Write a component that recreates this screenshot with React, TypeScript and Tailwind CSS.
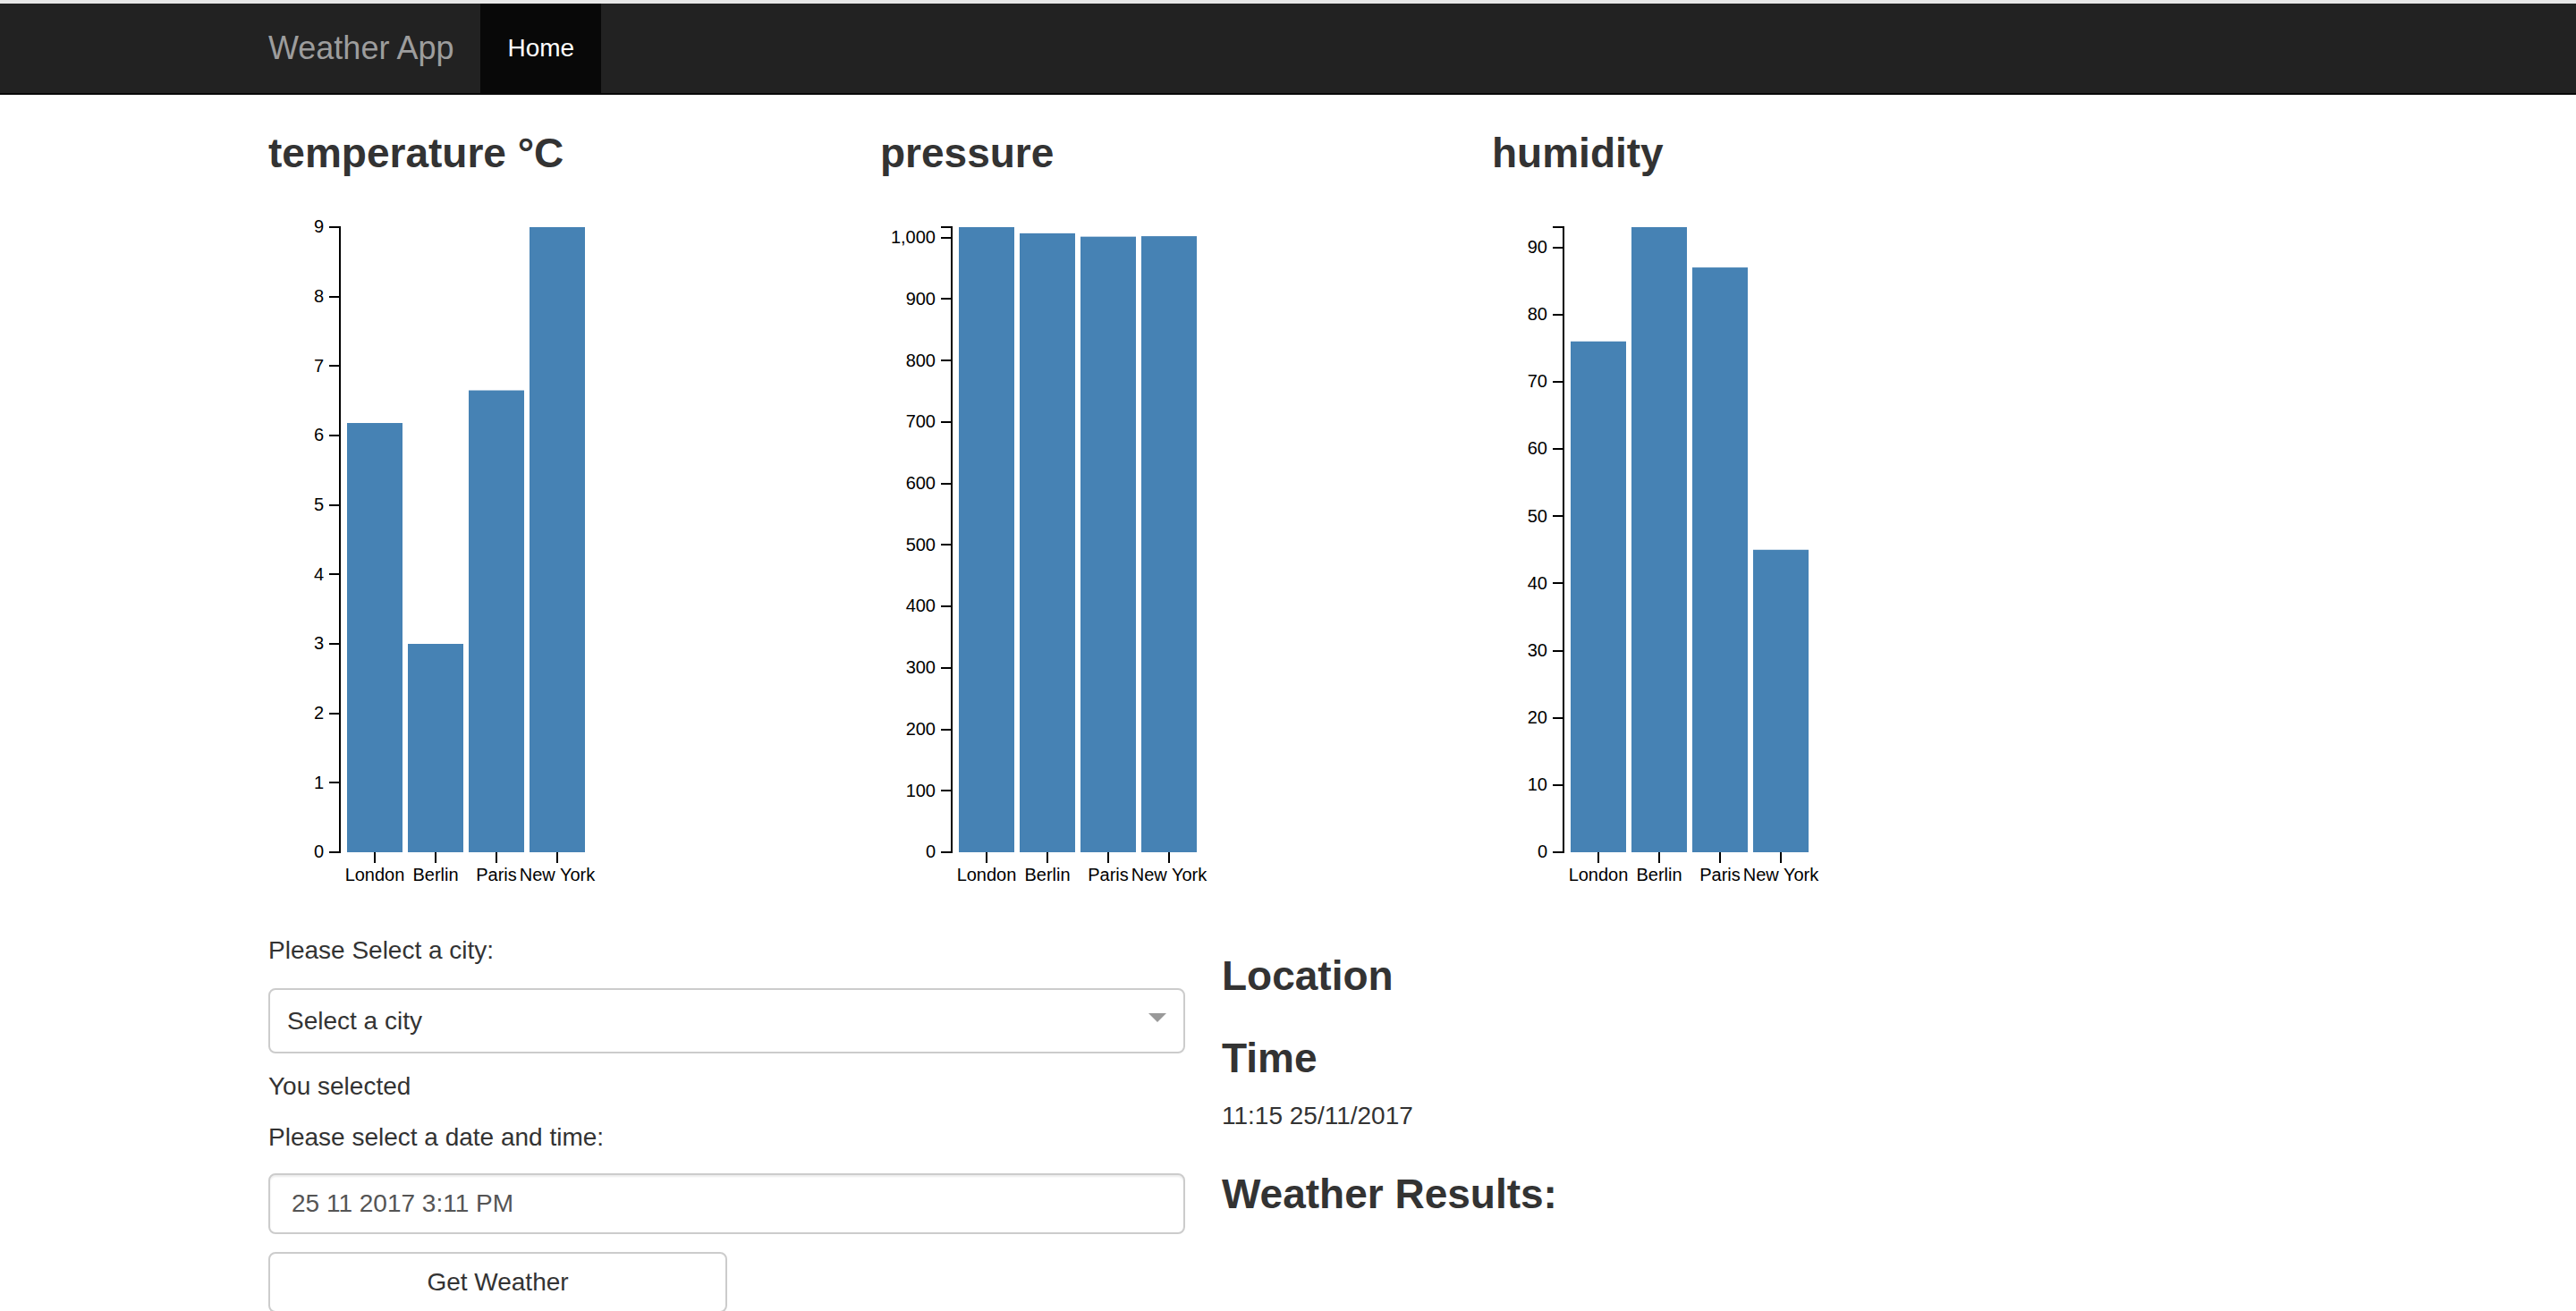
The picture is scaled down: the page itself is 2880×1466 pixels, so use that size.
import React from "react";

const CITIES = ["London", "Berlin", "Paris", "New York"];

type ChartProps = {
  title: string;
  values: number[];
  max: number;
  ticks: number[];
  fmt?: (v: number) => string;
};

const AX = 80;
const Y0 = 743;
const YT = 44;
const H = Y0 - YT;

function Chart({ title, values, max, ticks, fmt }: ChartProps) {
  const y = (v: number) => Y0 - (v / max) * H;
  const f = fmt ?? ((v: number) => String(v));
  return (
    <div className="w-[684px] shrink-0">
      <h3 className="h-[65px] text-[46px] leading-[52.8px] font-bold text-[#333]">
        {title}
      </h3>
      <svg width={684} height={800} className="block">
        {values.map((v, i) => (
          <rect
            key={i}
            x={AX + 8 + 68 * i}
            y={y(v)}
            width={62}
            height={Y0 - y(v)}
            fill="#4682b4"
          />
        ))}
        <path
          d={`M${AX - 12},${YT}H${AX}V${Y0}H${AX - 12}`}
          stroke="#000"
          strokeWidth={2}
          fill="none"
          shapeRendering="crispEdges"
        />
        {ticks.map((t) => (
          <g key={t}>
            <line
              x1={AX - 12}
              x2={AX}
              y1={y(t)}
              y2={y(t)}
              stroke="#000"
              strokeWidth={2}
              shapeRendering="crispEdges"
            />
            <text
              x={AX - 18}
              y={y(t)}
              dy="0.32em"
              textAnchor="end"
              fontSize={20}
              fill="#000"
            >
              {f(t)}
            </text>
          </g>
        ))}
        {CITIES.map((c, i) => {
          const cx = AX + 39 + 68 * i;
          return (
            <g key={c}>
              <line
                x1={cx}
                x2={cx}
                y1={Y0}
                y2={Y0 + 12}
                stroke="#000"
                strokeWidth={2}
                shapeRendering="crispEdges"
              />
              <text
                x={cx}
                y={Y0 + 18}
                dy="0.71em"
                textAnchor="middle"
                fontSize={20}
                fill="#000"
              >
                {c}
              </text>
            </g>
          );
        })}
      </svg>
    </div>
  );
}

const range = (n: number, step: number) =>
  Array.from({ length: n }, (_, i) => i * step);

export default function App() {
  return (
    <div className="h-screen overflow-hidden bg-white font-['Liberation_Sans',Arial,Helvetica,sans-serif] text-[#333]">
      <div className="h-[4px] bg-[#e8e8e8]" />
      <nav className="h-[102px] bg-[#222] border-b-2 border-[#080808]">
        <div className="mx-auto flex h-[100px] w-[2340px]">
          <a className="block px-[30px] pt-[30px] text-[36px] leading-[40px] text-[#9d9d9d]">
            Weather App
          </a>
          <a className="block h-[100px] bg-[#080808] px-[30px] pt-[30px] text-[28px] leading-[40px] text-white">
            Home
          </a>
        </div>
      </nav>

      <main className="mx-auto w-[2340px] px-[30px]">
        <div className="mt-[39px] flex">
          <Chart
            title="temperature °C"
            values={[6.18, 3.0, 6.65, 9]}
            max={9}
            ticks={range(10, 1)}
          />
          <Chart
            title="pressure"
            values={[1017, 1007, 1001.5, 1002.3]}
            max={1017}
            ticks={range(11, 100)}
            fmt={(v) => v.toLocaleString("en-US")}
          />
          <Chart
            title="humidity"
            values={[76, 93, 87, 45]}
            max={93}
            ticks={range(10, 10)}
          />
        </div>

        <div className="mt-[33px] flex">
          <div className="w-[1025px] shrink-0 text-[28px] leading-[40px]">
            <p>Please Select a city:</p>
            <div className="mt-[22px] flex h-[73px] items-center justify-between rounded-[8px] border-2 border-[#ccc] bg-white pl-[19px] pr-[19px]">
              <span className="text-[#333]">Select a city</span>
              <span className="mb-[7px] h-0 w-0 border-l-[10px] border-r-[10px] border-t-[10px] border-l-transparent border-r-transparent border-t-[#999]" />
            </div>
            <p className="mt-[17px]">You selected</p>
            <p className="mt-[17px]">Please select a date and time:</p>
            <div className="mt-[20px] flex h-[68px] items-center rounded-[8px] border-2 border-[#ccc] bg-white pl-[24px] text-[#555] shadow-[inset_0_2px_2px_rgba(0,0,0,0.075)]">
              25 11 2017 3:11 PM
            </div>
            <button className="mt-[20px] flex h-[68px] w-[513px] items-center justify-center rounded-[8px] border-2 border-[#ccc] bg-white text-[#333]">
              Get Weather
            </button>
          </div>

          <div className="ml-[41px] pt-[22px]">
            <h3 className="text-[46px] leading-[52.8px] font-bold">
              Location
            </h3>
            <h3 className="mt-[39px] text-[46px] leading-[52.8px] font-bold">
              Time
            </h3>
            <p className="mt-[18px] text-[28px] leading-[40px]">11:15 25/11/2017</p>
            <h3 className="mt-[41px] text-[46px] leading-[52.8px] font-bold">
              Weather Results:
            </h3>
          </div>
        </div>
      </main>
    </div>
  );
}
